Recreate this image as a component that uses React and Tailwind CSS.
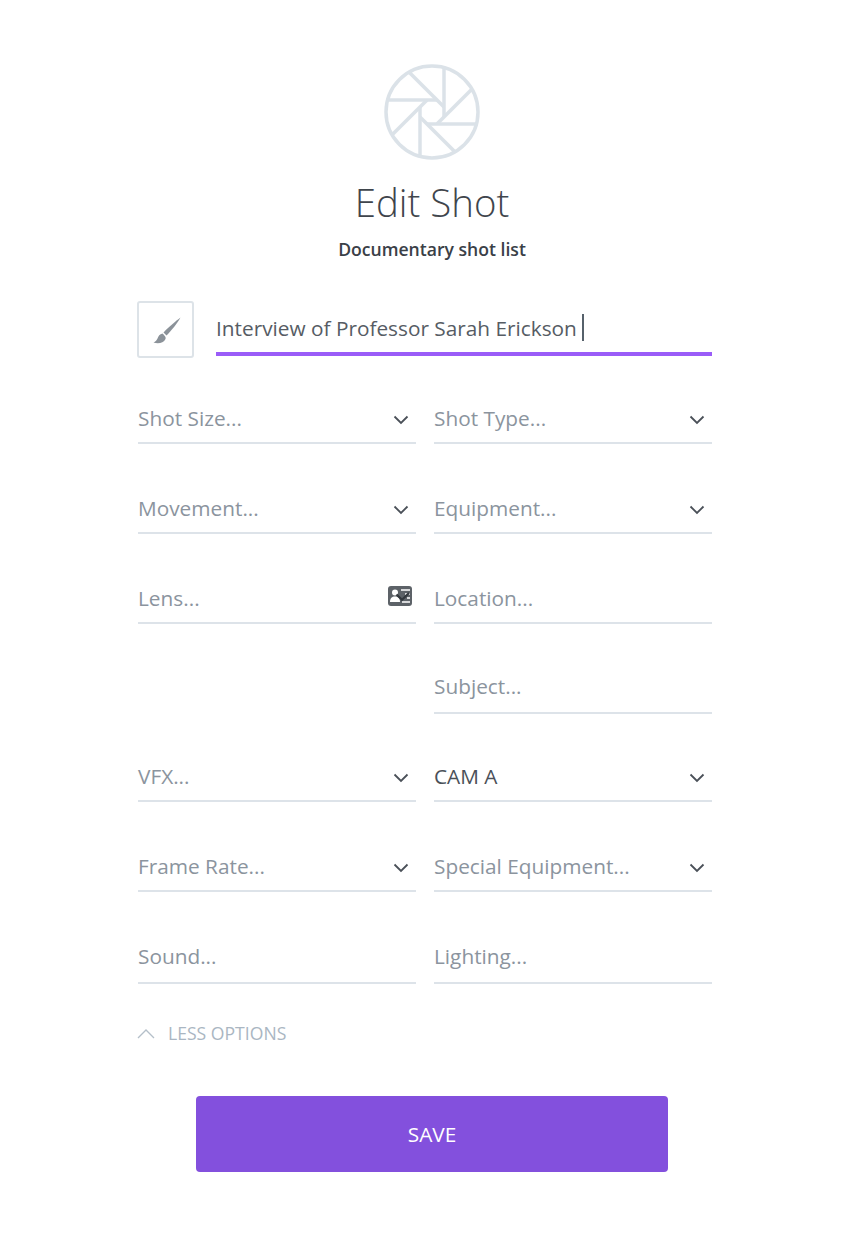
import React from 'react';

const Chevron = () => (
  <svg width="16" height="10" viewBox="0 0 16 10" fill="none" className="shrink-0">
    <path d="M1.5 1.5 8 8l6.5-6.5" stroke="#4a5058" strokeWidth="1.8" />
  </svg>
);

const CardIcon = () => (
  <svg width="24" height="20" viewBox="0 0 24 20" className="shrink-0">
    <rect x="0" y="0" width="24" height="20" rx="3" fill="#5d6268" />
    <circle cx="7" cy="6.500" r="3" fill="#fff" />
    <path d="M2 16c0-4 2-5.500 5-5.500s5 1.500 5 5.500z" fill="#fff" />
    <path d="M13 4h9M17 8h5M19 12h3M14 16h8" stroke="#fff" strokeWidth="1.600" />
    <path d="M8.500 8.500 14 13.800 21 7" stroke="#33383e" strokeWidth="2.200" fill="none" />
  </svg>
);

const Aperture = () => (
  <svg width="96" height="96" viewBox="-48 -48 96 96" fill="none" stroke="#dbe2e8" strokeWidth="3.500">
    <circle cx="0" cy="0" r="46" />
    {[0, 45, 90, 135, 180, 225, 270, 315].map((deg) => (
      <line key={deg} x1="12" y1="-45" x2="12" y2="5" transform={`rotate(${deg})`} />
    ))}
  </svg>
);

const Brush = () => (
  <svg width="30" height="28" viewBox="0 0 30 28" className="ml-[2px] mt-[2px] shrink-0">
    <path d="M28.500 0.500C24 4 16 10.500 11.500 15.500l3 3C19 14 25.500 6 28.500 0.500z" fill="#8b9299" />
    <path d="M10.500 16.500c-3 .5-4 2.500-5 5-.5 1.500-2 3-4 4 4 1.500 10 1 12-3.500.5-1.500.2-2.500-3-5.500z" fill="#8b9299" />
  </svg>
);

const Field = ({ label, filled, icon, raised }) => (
  <div className={`flex items-center justify-between border-b-2 border-[#dde3e9] ${raised ? 'pb-[12px]' : 'pb-[10px]'}`}>
    <span className={`text-[20.8px] leading-[28px] ${filled ? 'text-[#4a5058]' : 'text-[#8b949e]'}`}>{label}</span>
    {icon === 'chevron' && <div className="mr-[7px] mt-[3px]"><Chevron /></div>}
    {icon === 'card' && <div className="mb-[4px] mr-[4px]"><CardIcon /></div>}
  </div>
);

const rows = [
  { mt: 'mt-[46px]', left: ['Shot Size...', 'chevron'], right: ['Shot Type...', 'chevron'] },
  { mt: 'mt-[50px]', left: ['Movement...', 'chevron'], right: ['Equipment...', 'chevron'] },
  { mt: 'mt-[50px]', left: ['Lens...', 'card'], right: ['Location...'] },
  { mt: 'mt-[48px]', right: ['Subject...'], raised: true },
  { mt: 'mt-[48px]', left: ['VFX...', 'chevron'], right: ['CAM A', 'chevron', true] },
  { mt: 'mt-[50px]', left: ['Frame Rate...', 'chevron'], right: ['Special Equipment...', 'chevron'] },
  { mt: 'mt-[50px]', left: ['Sound...'], right: ['Lighting...'], raised: true },
];

export default function App() {
  return (
    <div className="min-h-[1234px] w-[864px] bg-white font-['Open_Sans',sans-serif]">
      <div className="flex flex-col items-center pt-[64px]">
        <Aperture />
        <h1 className="mt-[16px] text-[38.4px] font-light leading-[52px] text-[#3f454c]">Edit Shot</h1>
        <p className="mt-[10px] text-[17.6px] font-semibold leading-[22px] text-[#3a4047]">Documentary shot list</p>
      </div>

      <div className="ml-[138px] mr-[152px] mt-[41px]">
        <div className="flex items-end">
          <div className="-ml-px flex h-[57px] w-[57px] items-center justify-center rounded-[3px] border-2 border-[#dde3e8]">
            <Brush />
          </div>
          <div className="mb-[2px] ml-[22px] flex h-[42px] flex-1 items-start border-b-4 border-[#9a5cf8]">
            <span className="text-[20.8px] leading-[28px] text-[#565c64]">Interview of Professor Sarah Erickson</span>
            <span className="ml-[5px] h-[27px] w-[2px] bg-[#56616b]"></span>
          </div>
        </div>

        {rows.map((row, i) => (
          <div key={i} className={`grid grid-cols-2 gap-x-[18px] ${row.mt}`}>
            {row.left ? <Field label={row.left[0]} icon={row.left[1]} raised={row.raised} /> : <div />}
            <Field label={row.right[0]} icon={row.right[1]} filled={row.right[2]} raised={row.raised} />
          </div>
        ))}

        <div className="mt-[38px] flex items-center">
          <svg width="18" height="11" viewBox="0 0 18 11" fill="none" className="-ml-px">
            <path d="M1 10 9 2l8 8" stroke="#b4bfc9" strokeWidth="1.300" />
          </svg>
          <span className="ml-[13px] text-[17.6px] leading-[22px] text-[#aab6c2]">LESS OPTIONS</span>
        </div>
      </div>

      <div className="mt-[52px] flex justify-center">
        <button className="h-[76px] w-[472px] rounded-[4px] bg-[#8350dd] pt-[2px] text-[20.8px] text-white">SAVE</button>
      </div>
    </div>
  );
}
